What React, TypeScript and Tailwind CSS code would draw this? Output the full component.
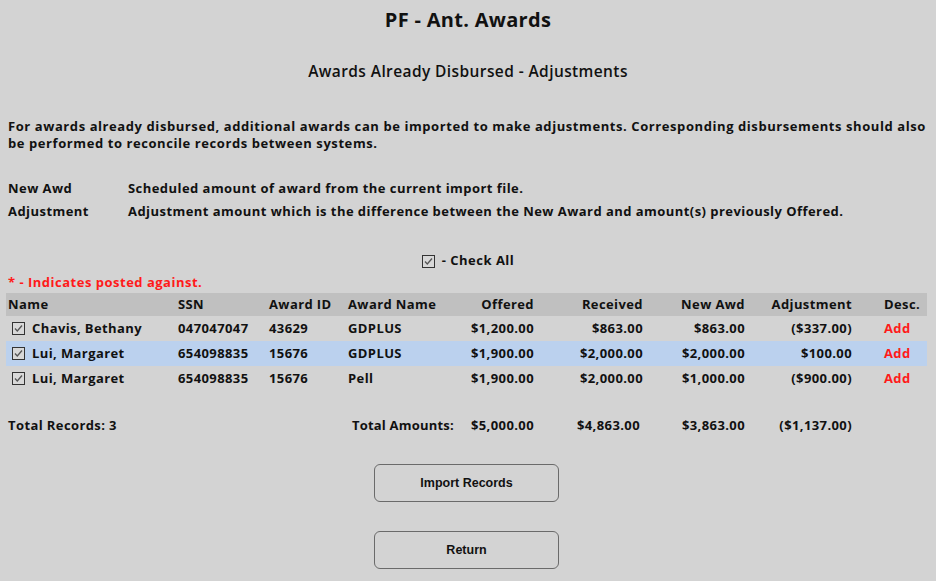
import React from 'react';

const rows = [
  { name: 'Chavis, Bethany', ssn: '047047047', id: '43629', award: 'GDPLUS', offered: '$1,200.00', received: '$863.00', newAwd: '$863.00', adj: '($337.00)', hl: false },
  { name: 'Lui, Margaret', ssn: '654098835', id: '15676', award: 'GDPLUS', offered: '$1,900.00', received: '$2,000.00', newAwd: '$2,000.00', adj: '$100.00', hl: true },
  { name: 'Lui, Margaret', ssn: '654098835', id: '15676', award: 'Pell', offered: '$1,900.00', received: '$2,000.00', newAwd: '$1,000.00', adj: '($900.00)', hl: false },
];

const grid = 'grid grid-cols-[170px_91px_79px_94px_96px_109px_102px_107px_73px] items-center';

const Check: React.FC = () => (
  <span className="inline-flex w-[13px] h-[13px] border border-[#333] bg-[#d8d8d8] items-center justify-center">
    <svg width="11" height="11" viewBox="0 0 11 11">
      <path d="M2 5.5 L4.3 8 L9 2.5" fill="none" stroke="#555" strokeWidth="1.3" />
    </svg>
  </span>
);

export default function App() {
  return (
    <div className="w-[936px] h-[581px] bg-[#d3d3d3] text-[#111] overflow-hidden font-['Open_Sans',sans-serif] font-bold text-[13px]">
      <h1 className="text-center text-[20px] font-bold leading-[24px] pt-[8px] tracking-[0.3px]">PF - Ant. Awards</h1>
      <h2 className="text-center text-[15.5px] font-semibold leading-[20px] mt-[29px] tracking-[0.4px]">Awards Already Disbursed - Adjustments</h2>

      <p className="px-[8px] mt-[37px] leading-[17px] tracking-[0.58px]">
        For awards already disbursed, additional awards can be imported to make adjustments. Corresponding disbursements should also
        <br />
        be performed to reconcile records between systems.
      </p>

      <div className="px-[8px] mt-[25px] tracking-[0.45px]">
        <div className="flex h-[23px] items-center">
          <span className="w-[120px]">New Awd</span>
          <span>Scheduled amount of award from the current import file.</span>
        </div>
        <div className="flex h-[23px] items-center">
          <span className="w-[120px]">Adjustment</span>
          <span>Adjustment amount which is the difference between the New Award and amount(s) previously Offered.</span>
        </div>
      </div>

      <div className="flex items-center justify-center gap-[7px] mt-[28px] h-[20px] tracking-[0.5px]">
        <Check />
        <span>- Check All</span>
      </div>
      <div className="px-[8px] text-[#ff1a1a] h-[22px] leading-[22px] tracking-[0.5px]">* - Indicates posted against.</div>

      <div className="mx-[6px] w-[921px] tracking-[0.4px]">
        <div className={`${grid} h-[23px] bg-[#c0c0c0]`}>
          <span className="px-[2px]">Name</span>
          <span className="px-[2px]">SSN</span>
          <span className="px-[2px]">Award ID</span>
          <span className="px-[2px]">Award Name</span>
          <span className="px-[2px] text-right">Offered</span>
          <span className="px-[2px] text-right">Received</span>
          <span className="px-[2px] text-right">New Awd</span>
          <span className="px-[2px] text-right">Adjustment</span>
          <span className="pl-[30px]">Desc.</span>
        </div>
        {rows.map((r, i) => (
          <div key={i} className={`${grid} h-[25px] ${r.hl ? 'bg-[#bbd1ee]' : ''}`}>
            <span className="flex items-center gap-[7px] pl-[6px]">
              <Check />
              <span>{r.name}</span>
            </span>
            <span className="px-[2px]">{r.ssn}</span>
            <span className="px-[2px]">{r.id}</span>
            <span className="px-[2px]">{r.award}</span>
            <span className="px-[2px] text-right">{r.offered}</span>
            <span className="px-[2px] text-right">{r.received}</span>
            <span className="px-[2px] text-right">{r.newAwd}</span>
            <span className="px-[2px] text-right">{r.adj}</span>
            <span className="pl-[30px] text-[#ff1a1a]">Add</span>
          </div>
        ))}
        <div className={`${grid} h-[23px] mt-[23px]`}>
          <span className="px-[2px] whitespace-nowrap">Total Records: 3</span>
          <span />
          <span />
          <span className="pl-[6px] whitespace-nowrap tracking-[0.2px]">Total Amounts:</span>
          <span className="px-[2px] text-right">$5,000.00</span>
          <span className="pr-[5px] text-right">$4,863.00</span>
          <span className="px-[2px] text-right">$3,863.00</span>
          <span className="px-[2px] text-right">($1,137.00)</span>
          <span />
        </div>
      </div>

      <div className="flex flex-col items-center gap-[29px] mt-[27px] pr-[3px] font-['Liberation_Sans',Arial,sans-serif]">
        <button className="w-[185px] h-[38px] rounded-[6px] border border-[#6a6a6a] bg-[#d3d3d3] text-[12.5px] font-bold text-[#111]">Import Records</button>
        <button className="w-[185px] h-[38px] rounded-[6px] border border-[#6a6a6a] bg-[#d3d3d3] text-[12.5px] font-bold text-[#111]">Return</button>
      </div>
    </div>
  );
}
